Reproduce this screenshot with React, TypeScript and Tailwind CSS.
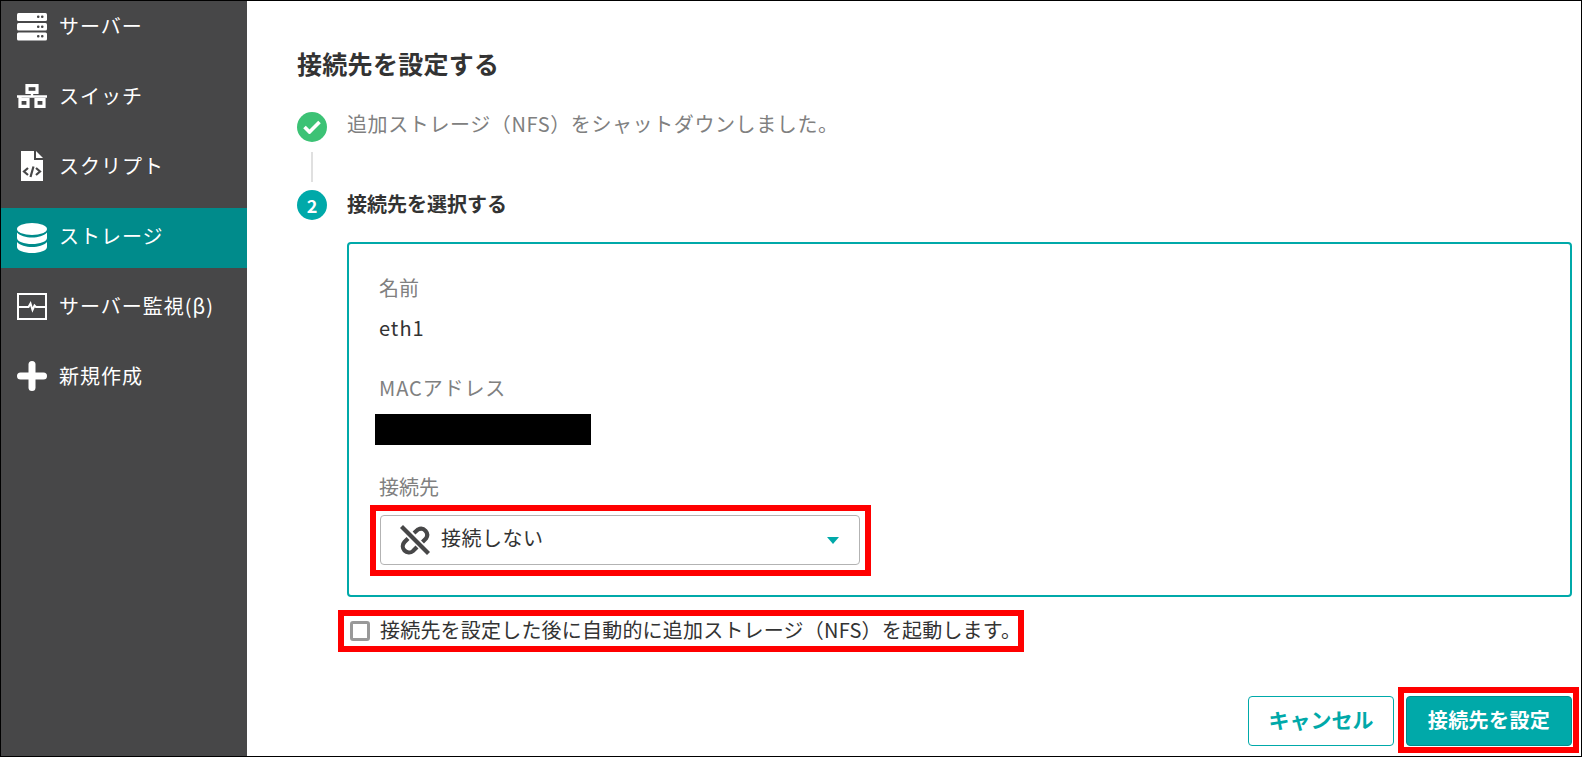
const font = { fontFamily: '"Noto Sans CJK JP", "Noto Sans", sans-serif' };

function ServerIcon() {
  return (
    <svg width="30" height="28" viewBox="0 0 30 28" fill="#fff">
      <rect x="0" y="0" width="30" height="8" rx="1.5" />
      <rect x="0" y="10" width="30" height="7.5" rx="1.5" />
      <rect x="0" y="19.5" width="30" height="8" rx="1.5" />
      <g fill="#474748">
        <rect x="20" y="2.5" width="2.5" height="2.5" rx="1" />
        <rect x="24" y="2.5" width="2.5" height="2.5" rx="1" />
        <rect x="20" y="12.5" width="2.5" height="2.5" rx="1" />
        <rect x="24" y="12.5" width="2.5" height="2.5" rx="1" />
        <rect x="20" y="22" width="2.5" height="2.5" rx="1" />
        <rect x="24" y="22" width="2.5" height="2.5" rx="1" />
      </g>
    </svg>
  );
}

function SwitchIcon() {
  return (
    <svg width="30" height="24" viewBox="0 0 30 24" fill="none" stroke="#fff" strokeWidth="3.2">
      <rect x="10" y="1.6" width="10" height="6.8" />
      <path d="M15 8V12.5M0 12.5H30" strokeWidth="2.4" />
      <path d="M3 12V22.4H11V15.5H1.5M19 22.4H27V15.5H19Z" />
    </svg>
  );
}

function FileCodeIcon() {
  return (
    <svg width="24" height="30" viewBox="0 0 24 30">
      <path d="M1 0H14V9H23V30H1Z" fill="#fff" />
      <path d="M16 0L23 7H16Z" fill="#fff" />
      <path d="M8 17L4 20.5L8 24M16 17L20 20.5L16 24M13.5 15.5L10.5 26" fill="none" stroke="#474748" strokeWidth="2.2" />
    </svg>
  );
}

function DbIcon() {
  return (
    <svg width="30" height="30" viewBox="0 0 30 30" fill="#fff">
      <ellipse cx="15" cy="6" rx="15" ry="6" />
      <path d="M0 9.5C3 13 9 14.5 15 14.5S27 13 30 9.5V15C30 18.5 23 21 15 21S0 18.5 0 15Z" />
      <path d="M0 19C3 22.5 9 24 15 24S27 22.5 30 19V24C30 27.5 23 30 15 30S0 27.5 0 24Z" />
    </svg>
  );
}

function MonitorIcon() {
  return (
    <svg width="30" height="27" viewBox="0 0 30 27" fill="none" stroke="#fff">
      <rect x="1" y="1" width="28" height="25" strokeWidth="2" />
      <path d="M2 14H11.5L13.5 10.5L15.5 17L17.5 12.5L19 14H28" strokeWidth="2" />
    </svg>
  );
}

function PlusIcon() {
  return (
    <svg width="30" height="30" viewBox="0 0 30 30" fill="#fff">
      <rect x="0" y="11.5" width="30" height="7" rx="3.5" />
      <rect x="11.5" y="0" width="7" height="30" rx="3.5" />
    </svg>
  );
}

function UnlinkIcon() {
  return (
    <svg width="30" height="30" viewBox="0 0 30 30" fill="none" stroke="#474748" strokeWidth="4.2">
      <path d="M1.5 1.5L28.5 28.5" />
      <path d="M14 8L18 4.5A6.2 6.2 0 0 1 26 13.5L22.5 17" />
      <path d="M8 13.5L4.5 17A6.2 6.2 0 0 0 13 26L17 22" />
    </svg>
  );
}

function NavRow({ icon, label, active, cls, textCls }: { icon: React.ReactNode; label: string; active?: boolean; cls: string; textCls?: string }) {
  return (
    <div className={`flex items-center shrink-0 pl-[16px] ${cls} ${active ? 'bg-[#008b8b]' : ''}`}>
      <span className="w-[30px] flex justify-center shrink-0">{icon}</span>
      <span className={`ml-[12px] text-[20px] tracking-[1px] text-white leading-none ${textCls ?? ''}`}>{label}</span>
    </div>
  );
}

function RedBox({ cls }: { cls: string }) {
  return <div className={`absolute border-[6px] border-[#ff0000] pointer-events-none ${cls}`} />;
}

export default function App() {
  return (
    <div className="w-[1582px] h-[757px] border border-black flex overflow-hidden bg-white" style={font}>
      <aside className="w-[246px] shrink-0 bg-[#474748] flex flex-col overflow-hidden">
        <NavRow icon={<ServerIcon />} label="サーバー" cls="h-[52px]" textCls="pb-[2px]" />
        <NavRow icon={<SwitchIcon />} label="スイッチ" cls="h-[70px] mt-[8px]" />
        <NavRow icon={<FileCodeIcon />} label="スクリプト" cls="h-[70px]" />
        <NavRow icon={<DbIcon />} label="ストレージ" active cls="h-[60px] mt-[7px]" textCls="pb-[4px]" />
        <NavRow icon={<MonitorIcon />} label="サーバー監視(β)" cls="h-[70px] mt-[3px]" />
        <NavRow icon={<PlusIcon />} label="新規作成" cls="h-[70px]" />
      </aside>
      <main className="flex-1 flex flex-col pl-[50px] pr-[9px] pt-[46px] text-[#333]">
        <h1 className="text-[25px] font-bold leading-[32px] tracking-[0.3px]">接続先を設定する</h1>
        <div className="flex items-center mt-[32px] h-[32px]">
          <div className="w-[30px] h-[30px] rounded-full bg-[#3cc275] flex items-center justify-center shrink-0">
            <svg width="18" height="14" viewBox="0 0 18 14" fill="none" stroke="#fff" strokeWidth="3.6">
              <path d="M1.5 7L6.5 12L16.5 2" />
            </svg>
          </div>
          <span className="ml-[20px] pb-[6px] text-[20px] tracking-[0.6px] text-[#808080]">追加ストレージ（NFS）をシャットダウンしました。</span>
        </div>
        <div className="w-[2px] h-[30px] bg-[#e0e0e0] ml-[14px] mt-[9px]" />
        <div className="flex items-center mt-[7px] h-[32px]">
          <div className="w-[30px] h-[30px] rounded-full bg-[#00a9a9] text-white text-[18px] font-bold flex items-center justify-center shrink-0">2</div>
          <span className="ml-[20px] pb-[2px] text-[20px] font-bold">接続先を選択する</span>
        </div>
        <div className="mt-[21px] ml-[50px] h-[355px] border-2 border-[#00a9a9] rounded-[4px] pl-[30px] flex flex-col">
          <div className="text-[20px] text-[#808080] leading-[26px] mt-[31px]">名前</div>
          <div className="text-[20px] tracking-[1px] leading-[26px] mt-[14px]">eth1</div>
          <div className="text-[20px] tracking-[0.9px] text-[#808080] leading-[26px] mt-[34px]">MACアドレス</div>
          <div className="w-[216px] h-[31px] bg-black -ml-[4px] mt-[13px]" />
          <div className="text-[20px] text-[#808080] leading-[26px] mt-[29px]">接続先</div>
          <div className="relative w-[480px] h-[50px] ml-[1px] mt-[15px] border border-[#b3b3b3] rounded-[4px] flex items-center pl-[19px] pr-[19px]">
            <UnlinkIcon />
            <span className="ml-[11px] pb-[4px] text-[20px] tracking-[0.5px]">接続しない</span>
            <span className="ml-auto mr-[1px] w-0 h-0 border-l-[6px] border-r-[6px] border-t-[7px] border-l-transparent border-r-transparent border-t-[#00a9a9]" />
            <RedBox cls="-left-[11px] -right-[12px] -top-[11px] -bottom-[12px]" />
          </div>
        </div>
        <div className="relative flex items-center mt-[21px] ml-[53px] h-[26px]">
          <div className="w-[20px] h-[20px] border-[3px] border-[#999] rounded-[3px] bg-white" />
          <span className="ml-[10px] pb-[2px] text-[20px] tracking-[0.2px] whitespace-nowrap">接続先を設定した後に自動的に追加ストレージ（NFS）を起動します。</span>
          <RedBox cls="-left-[12px] w-[686px] -top-[8px] -bottom-[8px]" />
        </div>
        <div className="flex justify-end gap-[12px] mt-[52px]">
          <button className="w-[146px] h-[50px] pb-[3px] border border-[#00a9a9] rounded-[4px] text-[#00a9a9] text-[21px] font-bold">キャンセル</button>
          <div className="relative">
            <button className="w-[166px] h-[50px] pb-[3px] bg-[#00a9a9] border border-[#008b8b] rounded-[4px] text-white text-[20px] tracking-[0.4px] font-bold">接続先を設定</button>
            <RedBox cls="-left-[8px] -right-[7px] -top-[9px] -bottom-[7px]" />
          </div>
        </div>
      </main>
    </div>
  );
}
